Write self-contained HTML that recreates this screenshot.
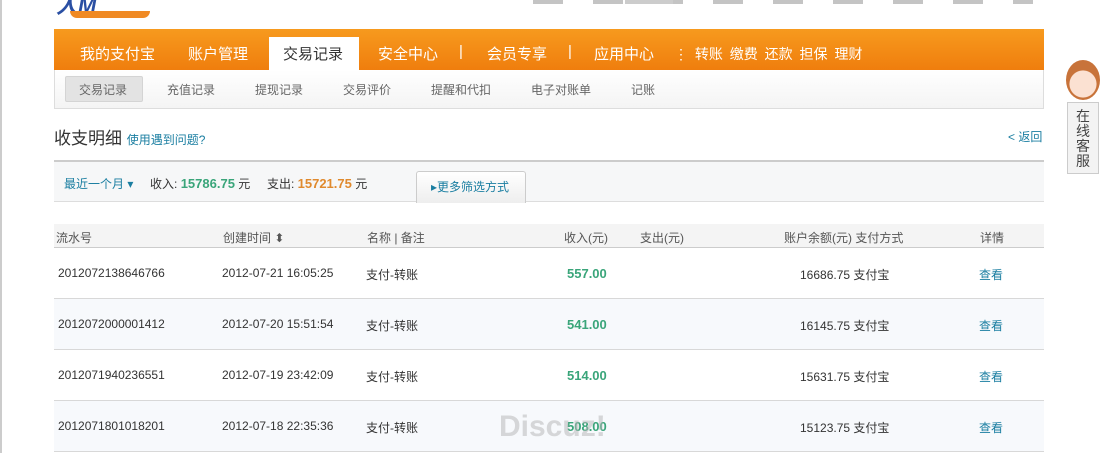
<!DOCTYPE html><html><head><meta charset="utf-8"><style>
*{margin:0;padding:0;box-sizing:border-box}
body{width:1106px;height:453px;overflow:hidden;background:#fff;font-family:"Liberation Sans","Noto Sans CJK SC",sans-serif;font-size:12px;color:#333;position:relative}
.a{position:absolute}
.nav{left:54px;top:29px;width:990px;height:42px;background:linear-gradient(#f79a1e,#ef7d0d);}
.nav span{position:absolute;top:14px;color:#fff;font-size:15px;white-space:nowrap}
.sub{left:54px;top:70px;width:990px;height:39px;border:1px solid #ddd;border-top:none;background:linear-gradient(#fff,#f4f4f4)}
.sub span{position:absolute;top:11px;color:#666;font-size:12px}
.row{left:54px;width:990px;height:51px;border-bottom:1px solid #d8d8d8}
.row span{position:absolute;top:18px;font-size:12px}
.g{color:#3aa57a;font-weight:bold;font-size:13px!important}
.l{color:#1a7ea1}
</style></head><body>
<div class="a" style="left:0;top:0;width:2px;height:453px;background:#ccc"></div>
<div class="a" style="left:56px;top:0;width:92px;height:18px;color:#2a4fa3;font-size:22px;font-weight:bold;font-style:italic;line-height:12px">人M</div>
<div class="a" style="left:70px;top:11px;width:80px;height:7px;background:#f08a24;border-radius:0 0 30px 30px"></div>
<div class="a" style="left:533px;top:0;width:500px;height:4px;background:repeating-linear-gradient(90deg,#888 0 30px,#fff 30px 60px);opacity:.5"></div>
<div class="a" style="left:625px;top:0;width:48px;height:4px;background:#ccc"></div>
<div class="a nav">
<span style="left:26px">我的支付宝</span><span style="left:134px">账户管理</span>
<div class="a" style="left:215px;top:8px;width:90px;height:34px;background:#fff"></div>
<span style="left:229px;color:#333">交易记录</span><span style="left:324px">安全中心</span>
<span style="left:405px">|</span><span style="left:433px">会员专享</span><span style="left:514px">|</span><span style="left:540px">应用中心</span>
<span style="left:620px;font-size:14px;top:15px;word-spacing:3px">⋮ 转账 缴费 还款 担保 理财</span>
</div>
<div class="a sub">
<div class="a" style="left:10px;top:6px;width:78px;height:26px;background:#e3e3e3;border:1px solid #d4d4d4;border-radius:2px"></div>
<span style="left:24px">交易记录</span><span style="left:112px">充值记录</span><span style="left:200px">提现记录</span><span style="left:288px">交易评价</span><span style="left:376px">提醒和代扣</span><span style="left:476px">电子对账单</span><span style="left:576px">记账</span>
</div>
<div class="a" style="left:54px;top:124px;font-size:17px;color:#333">收支明细 <span style="font-size:12px;color:#1a7ea1">使用遇到问题?</span></div>
<div class="a l" style="left:1008px;top:128px">&lt; 返回</div>
<div class="a" style="left:1066px;top:60px;width:34px;height:40px;border-radius:50%;background:radial-gradient(circle at 50% 60%,#fbe1d2 45%,#c8733a 47%)"></div>
<div class="a" style="left:1067px;top:102px;width:32px;height:72px;border:1px solid #ccc;background:#f3f3f3;color:#444;font-size:14px;line-height:15px;text-align:center;padding-top:6px">在<br>线<br>客<br>服</div>
<div class="a" style="left:54px;top:160px;width:990px;height:42px;background:#f6f7f8;border-top:2px solid #ccc;border-bottom:1px solid #ddd"></div>
<div class="a" style="left:64px;top:175px;font-size:12px"><span class="l">最近一个月 ▾</span>&nbsp;&nbsp;&nbsp;&nbsp; 收入: <b style="color:#3aa57a;font-size:13px">15786.75</b> 元&nbsp;&nbsp;&nbsp;&nbsp; 支出: <b style="color:#e08a2e;font-size:13px">15721.75</b> 元</div>
<div class="a" style="left:416px;top:171px;width:110px;height:32px;background:linear-gradient(#fff,#eee);border:1px solid #ccc;border-bottom:none;border-radius:3px 3px 0 0;color:#1a7ea1;padding:6px 0 0 14px">▸更多筛选方式</div>
<div class="a" style="left:54px;top:224px;width:990px;height:24px;background:#f4f4f4;border-bottom:1px solid #ccc"></div>
<div class="a" style="left:56px;top:229px;color:#555;width:990px">
<span class="a" style="left:0">流水号</span><span class="a" style="left:167px">创建时间 ⬍</span><span class="a" style="left:311px">名称 | 备注</span><span class="a" style="left:508px">收入(元)</span><span class="a" style="left:584px">支出(元)</span><span class="a" style="left:728px">账户余额(元) 支付方式</span><span class="a" style="left:924px">详情</span></div>
<div class="a row" style="top:248px;background:#fff"><span style="left:4px">2012072138646766</span><span style="left:168px">2012-07-21 16:05:25</span><span style="left:312px">支付-转账</span><span class="g" style="left:513px">557.00</span><span style="left:746px">16686.75 支付宝</span><span class="l" style="left:925px">查看</span></div>
<div class="a row" style="top:299px;background:#f7f9fc"><span style="left:4px">2012072000001412</span><span style="left:168px">2012-07-20 15:51:54</span><span style="left:312px">支付-转账</span><span class="g" style="left:513px">541.00</span><span style="left:746px">16145.75 支付宝</span><span class="l" style="left:925px">查看</span></div>
<div class="a row" style="top:350px;background:#fff"><span style="left:4px">2012071940236551</span><span style="left:168px">2012-07-19 23:42:09</span><span style="left:312px">支付-转账</span><span class="g" style="left:513px">514.00</span><span style="left:746px">15631.75 支付宝</span><span class="l" style="left:925px">查看</span></div>
<div class="a row" style="top:401px;background:#f7f9fc"><span style="left:4px">2012071801018201</span><span style="left:168px">2012-07-18 22:35:36</span><span style="left:312px">支付-转账</span><span class="g" style="left:513px">508.00</span><span style="left:746px">15123.75 支付宝</span><span class="l" style="left:925px">查看</span></div>
<div class="a" style="left:499px;top:410px;font-size:30px;font-weight:bold;color:rgba(180,180,180,.5)">Discuz!</div>
</body></html>
